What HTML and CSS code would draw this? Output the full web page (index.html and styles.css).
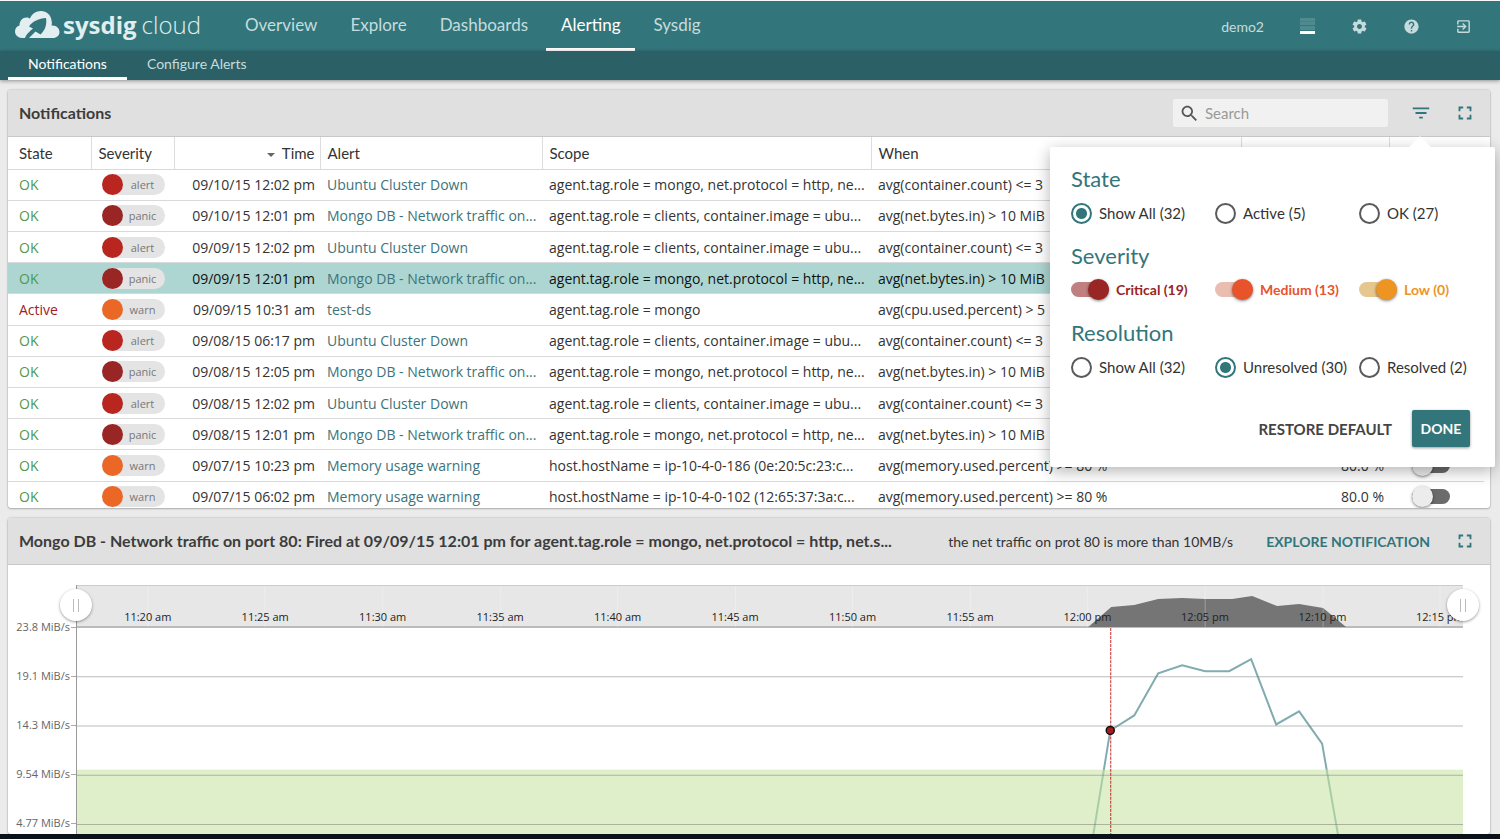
FILE: index.html
```html
<!DOCTYPE html>
<html lang="en">
<head>
	<meta charset="utf-8">
	<title>Sysdig Cloud - Alerting</title>
	<link rel="stylesheet" href="styles.css">
</head>
<body>
	<header class="topbar">
		<a class="logo" href="#">
			<svg class="logo-mark" viewBox="0 0 45 28">
				<path fill="#e3eef0" fill-rule="evenodd" d="M7 27C3 27 0 24 0 20.500C0 17.500 2 15 4.500 14.500C4.500 10 7.500 6.500 11.500 6.500C13 6.500 14 7 15 7.500C16.500 3 21 0 26 0C31.500 0 36 4 36.500 9.500C37 11 37 12.500 36.500 14.500C41 14 44.500 17 44.500 21C44.500 24.500 41.500 27 38 27H14L20.500 20.500L25.500 23.500C30.500 19 32 13 31 7C24 7.500 17.500 10 14 15.500L18 17.500C15 20 11 23.500 10 27Z"/>
			</svg>
			<span class="logo-name">sysdig</span><span class="logo-cloud">cloud</span>
		</a>
		<nav class="main-nav">
			<a href="#">Overview</a>
			<a href="#">Explore</a>
			<a href="#">Dashboards</a>
			<a href="#" class="active">Alerting</a>
			<a href="#">Sysdig</a>
		</nav>
		<div class="user-tools">
			<a href="#" class="user">demo2</a>
			<button class="tool" aria-label="Load"><span class="bars"></span></button>
			<button class="tool" aria-label="Settings">
				<svg viewBox="0 0 24 24"><path d="M19.430 12.980c.04-.32.07-.64.07-.98s-.03-.66-.07-.98l2.110-1.650c.19-.15.24-.42.12-.64l-2-3.460c-.12-.22-.39-.3-.61-.22l-2.490 1c-.52-.4-1.080-.73-1.690-.98l-.38-2.650C14.460 2.180 14.250 2 14 2h-4c-.25 0-.46.18-.49.42l-.38 2.650c-.61.25-1.170.59-1.690.98l-2.490-1c-.23-.09-.49 0-.61.22l-2 3.460c-.13.22-.07.49.12.64l2.110 1.650c-.04.32-.07.65-.07.98s.03.66.07.98l-2.110 1.650c-.19.15-.24.42-.12.64l2 3.460c.12.22.39.3.61.22l2.490-1c.52.4 1.080.73 1.690.98l.38 2.650c.03.24.24.42.49.42h4c.25 0 .46-.18.49-.42l.38-2.650c.61-.25 1.170-.59 1.690-.98l2.490 1c.23.09.49 0 .61-.22l2-3.460c.12-.22.07-.49-.12-.64zM12 15.500c-1.930 0-3.500-1.570-3.500-3.500s1.570-3.500 3.500-3.500 3.500 1.570 3.500 3.500-1.570 3.500-3.500 3.500z"/></svg>
			</button>
			<button class="tool" aria-label="Help">
				<svg viewBox="0 0 24 24"><path d="M12 2C6.480 2 2 6.480 2 12s4.480 10 10 10 10-4.480 10-10S17.520 2 12 2zm1 17h-2v-2h2zm2.070-7.750l-.9.920C13.450 12.900 13 13.500 13 15h-2v-.5c0-1.100.45-2.100 1.170-2.830l1.240-1.260c.37-.36.59-.86.59-1.410 0-1.100-.9-2-2-2s-2 .9-2 2H8c0-2.210 1.790-4 4-4s4 1.790 4 4c0 .88-.36 1.680-.93 2.250z"/></svg>
			</button>
			<button class="tool" aria-label="Sign out">
				<svg viewBox="0 0 24 24"><path d="M10.090 15.590L11.500 17l5-5-5-5-1.410 1.410L12.670 11H3v2h9.670zM19 3H5c-1.110 0-2 .9-2 2v4h2V5h14v14H5v-4H3v4c0 1.100.89 2 2 2h14c1.100 0 2-.9 2-2V5c0-1.100-.9-2-2-2z"/></svg>
			</button>
		</div>
	</header>
	<nav class="sub-nav">
		<a href="#" class="active">Notifications</a>
		<a href="#">Configure Alerts</a>
	</nav>

	<main class="content">
		<section class="panel">
			<div class="panel-head">
				<h2>Notifications</h2>
				<label class="search">
					<svg viewBox="0 0 24 24"><path d="M15.500 14h-.79l-.28-.27C15.410 12.590 16 11.110 16 9.500 16 5.910 13.090 3 9.500 3S3 5.910 3 9.500 5.910 16 9.500 16c1.610 0 3.090-.59 4.230-1.570l.27.28v.79l5 4.990L20.490 19zm-6 0C7.010 14 5 11.990 5 9.500S7.010 5 9.500 5 14 7.010 14 9.500 11.990 14 9.500 14z"/></svg>
					<input type="text" placeholder="Search" aria-label="Search">
				</label>
				<button class="icon-btn" aria-label="Filter">
					<svg viewBox="0 0 24 24"><path d="M10 18h4v-2h-4zM3 6v2h18V6zm3 7h12v-2H6z"/></svg>
				</button>
				<button class="icon-btn" aria-label="Full screen">
					<svg viewBox="0 0 24 24"><path d="M5 5h5v2H7v3H5zM14 5h5v5h-2V7h-3zM17 14h2v5h-5v-2h3zM5 14h2v3h3v2H5z"/></svg>
				</button>

				<form class="filter">
					<fieldset>
						<legend>State</legend>
						<div class="options">
							<label><input type="radio" name="state" checked>Show All (32)</label>
							<label><input type="radio" name="state">Active (5)</label>
							<label><input type="radio" name="state">OK (27)</label>
						</div>
					</fieldset>
					<fieldset>
						<legend>Severity</legend>
						<div class="options severities">
							<label class="critical"><input type="checkbox" class="toggle" checked>Critical (19)</label>
							<label class="medium"><input type="checkbox" class="toggle" checked>Medium (13)</label>
							<label class="low"><input type="checkbox" class="toggle" checked>Low (0)</label>
						</div>
					</fieldset>
					<fieldset>
						<legend>Resolution</legend>
						<div class="options">
							<label><input type="radio" name="resolution">Show All (32)</label>
							<label><input type="radio" name="resolution" checked>Unresolved (30)</label>
							<label><input type="radio" name="resolution">Resolved (2)</label>
						</div>
					</fieldset>
					<div class="actions">
						<button type="reset" class="restore">RESTORE DEFAULT</button>
						<button type="button" class="done">DONE</button>
					</div>
				</form>
			</div>

			<div class="table-wrap">
				<table>
					<colgroup>
						<col class="col-state"><col class="col-severity"><col class="col-time"><col class="col-alert"><col class="col-scope"><col><col class="col-value"><col class="col-toggle">
					</colgroup>
					<thead>
						<tr><th>State</th><th>Severity</th><th class="time"><span class="caret"></span>Time</th><th>Alert</th><th>Scope</th><th>When</th><th></th><th></th></tr>
					</thead>
					<tbody>
						<tr><td class="ok">OK</td><td><span class="pill alert">alert</span></td><td class="time">09/10/15 12:02 pm</td><td><a href="#">Ubuntu Cluster Down</a></td><td>agent.tag.role = mongo, net.protocol = http, ne...</td><td>avg(container.count) &lt;= 3</td><td></td><td></td></tr>
						<tr><td class="ok">OK</td><td><span class="pill panic">panic</span></td><td class="time">09/10/15 12:01 pm</td><td><a href="#">Mongo DB - Network traffic on...</a></td><td>agent.tag.role = clients, container.image = ubu...</td><td>avg(net.bytes.in) &gt; 10 MiB</td><td></td><td></td></tr>
						<tr><td class="ok">OK</td><td><span class="pill alert">alert</span></td><td class="time">09/09/15 12:02 pm</td><td><a href="#">Ubuntu Cluster Down</a></td><td>agent.tag.role = clients, container.image = ubu...</td><td>avg(container.count) &lt;= 3</td><td></td><td></td></tr>
						<tr class="selected"><td class="ok">OK</td><td><span class="pill panic">panic</span></td><td class="time">09/09/15 12:01 pm</td><td><a href="#">Mongo DB - Network traffic on...</a></td><td>agent.tag.role = mongo, net.protocol = http, ne...</td><td>avg(net.bytes.in) &gt; 10 MiB</td><td></td><td></td></tr>
						<tr><td class="bad">Active</td><td><span class="pill warn">warn</span></td><td class="time">09/09/15 10:31 am</td><td><a href="#">test-ds</a></td><td>agent.tag.role = mongo</td><td>avg(cpu.used.percent) &gt; 5</td><td></td><td></td></tr>
						<tr><td class="ok">OK</td><td><span class="pill alert">alert</span></td><td class="time">09/08/15 06:17 pm</td><td><a href="#">Ubuntu Cluster Down</a></td><td>agent.tag.role = clients, container.image = ubu...</td><td>avg(container.count) &lt;= 3</td><td></td><td></td></tr>
						<tr><td class="ok">OK</td><td><span class="pill panic">panic</span></td><td class="time">09/08/15 12:05 pm</td><td><a href="#">Mongo DB - Network traffic on...</a></td><td>agent.tag.role = mongo, net.protocol = http, ne...</td><td>avg(net.bytes.in) &gt; 10 MiB</td><td></td><td></td></tr>
						<tr><td class="ok">OK</td><td><span class="pill alert">alert</span></td><td class="time">09/08/15 12:02 pm</td><td><a href="#">Ubuntu Cluster Down</a></td><td>agent.tag.role = clients, container.image = ubu...</td><td>avg(container.count) &lt;= 3</td><td></td><td></td></tr>
						<tr><td class="ok">OK</td><td><span class="pill panic">panic</span></td><td class="time">09/08/15 12:01 pm</td><td><a href="#">Mongo DB - Network traffic on...</a></td><td>agent.tag.role = mongo, net.protocol = http, ne...</td><td>avg(net.bytes.in) &gt; 10 MiB</td><td></td><td></td></tr>
						<tr><td class="ok">OK</td><td><span class="pill warn">warn</span></td><td class="time">09/07/15 10:23 pm</td><td><a href="#">Memory usage warning</a></td><td>host.hostName = ip-10-4-0-186 (0e:20:5c:23:c...</td><td>avg(memory.used.percent) &gt;= 80 %</td><td class="value">80.0 %</td><td class="resolve"><input type="checkbox" class="toggle" aria-label="Resolved"></td></tr>
						<tr><td class="ok">OK</td><td><span class="pill warn">warn</span></td><td class="time">09/07/15 06:02 pm</td><td><a href="#">Memory usage warning</a></td><td>host.hostName = ip-10-4-0-102 (12:65:37:3a:c...</td><td>avg(memory.used.percent) &gt;= 80 %</td><td class="value">80.0 %</td><td class="resolve"><input type="checkbox" class="toggle" aria-label="Resolved"></td></tr>
					</tbody>
				</table>
			</div>
		</section>

		<section class="panel detail">
			<div class="panel-head">
				<h2>Mongo DB - Network traffic on port 80: Fired at 09/09/15 12:01 pm for agent.tag.role = mongo, net.protocol = http, net.s...</h2>
				<p>the net traffic on prot 80 is more than 10MB/s</p>
				<a href="#" class="explore">EXPLORE NOTIFICATION</a>
				<button class="icon-btn" aria-label="Full screen">
					<svg viewBox="0 0 24 24"><path d="M5 5h5v2H7v3H5zM14 5h5v5h-2V7h-3zM17 14h2v5h-5v-2h3zM5 14h2v3h3v2H5z"/></svg>
				</button>
			</div>
			<div class="chart">
				<div class="y-axis">
					<span>23.8 MiB/s</span>
					<span>19.1 MiB/s</span>
					<span>14.3 MiB/s</span>
					<span>9.54 MiB/s</span>
					<span>4.77 MiB/s</span>
				</div>
				<div class="plot">
					<div class="range">
						<svg viewBox="0 0 1387 41" preserveAspectRatio="none">
							<path fill="#757575" d="M1012 41L1035 21L1058 19L1082 13L1106 12L1129 13H1156L1176 10L1201 20L1223 18L1247 22L1270 41Z"/>
							<path stroke="#fff" stroke-opacity=".3" d="M71 0V41M188 0V41M306 0V41M424 0V41M541 0V41M659 0V41M776 0V41M894 0V41M1011 0V41M1129 0V41M1247 0V41M1364 0V41"/>
						</svg>
						<div class="times">
							<span>11:20 am</span><span>11:25 am</span><span>11:30 am</span><span>11:35 am</span><span>11:40 am</span><span>11:45 am</span><span>11:50 am</span><span>11:55 am</span><span>12:00 pm</span><span>12:05 pm</span><span>12:10 pm</span><span>12:15 pm</span>
						</div>
						<button class="handle start" aria-label="Range start"></button>
						<button class="handle end" aria-label="Range end"></button>
					</div>
					<svg class="series" viewBox="0 0 1387 206" preserveAspectRatio="none">
						<path fill="none" stroke="#80acb1" stroke-width="2" d="M1016 212L1034 102L1058 87L1082 45L1106 37L1129 43H1153L1175 31L1200 96L1223 83L1246 115L1263 212"/>
						<rect y="141" width="1387" height="65" fill="#c6e4a2" fill-opacity=".58"/>
						<path stroke="#777" stroke-opacity=".5" d="M0 48.500H1387M0 97.500H1387M0 146.500H1387M0 195.500H1387"/>
						<path stroke="#c62828" stroke-dasharray="3 1" d="M1034.500 0V206"/>
						<circle cx="1034" cy="102" r="4" fill="#a32020" stroke="#111" stroke-width="1.500"/>
					</svg>
				</div>
			</div>
		</section>
	</main>
	<footer class="bottom-edge"></footer>
</body>
</html>
```
FILE: styles.css
```css
* {
	box-sizing: border-box;
}

body {
	margin: 0;
	height: 100vh;
	display: flex;
	flex-direction: column;
	overflow: hidden;
	background: #ebebeb;
	border-top: 1px solid #f4f8f8;
	color: #333;
	font-family: "Lato", sans-serif;
	font-size: 15px;
}

a {
	color: inherit;
	text-decoration: none;
}

button {
	font: inherit;
	padding: 0;
	border: 0;
	background: none;
	cursor: pointer;
}

svg {
	display: block;
}

/* top bars */
.topbar {
	flex: none;
	display: flex;
	height: 50px;
	padding-left: 15px;
	background: #32767b;
	color: #c5dcde;
}

.logo {
	display: flex;
	align-items: center;
	width: 215px;
	color: #e3eef0;
	font-family: "Open Sans", sans-serif;
	font-size: 24px;
	line-height: 30px;
	padding-bottom: 3px;
}

.logo-mark {
	width: 45px;
	height: 28px;
	margin-right: 3px;
}

.logo-name {
	font-weight: 700;
	margin-right: 5px;
}

.logo-cloud {
	font-weight: 300;
}

.main-nav {
	display: flex;
	font-size: 17px;
}

.main-nav a {
	padding: 0 15px;
	margin-right: 3px;
	line-height: 47px;
	border-bottom: 3px solid transparent;
}

.main-nav .active,
.sub-nav .active {
	color: #fff;
	border-color: #fff;
}

.user-tools {
	display: flex;
	align-items: center;
	margin-left: auto;
	padding-right: 11px;
}

.user {
	margin-right: 17px;
	font-size: 14px;
}

.tool {
	display: flex;
	justify-content: center;
	width: 52px;
}

.tool svg {
	width: 17px;
	height: 17px;
	fill: #c5dcde;
}

.bars {
	width: 15px;
	height: 16px;
	background: linear-gradient(#4f8a8f 3px, #468388 3px 4px, #4f8a8f 4px 7px, #32767b 7px 8px, #4f8a8f 8px 12px, #32767b 12px 13px, #fff 13px);
}

.sub-nav {
	flex: none;
	display: flex;
	height: 29px;
	padding-left: 8px;
	background: #2b6166;
	color: #c5dcde;
	font-size: 14px;
	box-shadow: 0 1px 4px rgba(0, 0, 0, .4);
}

.sub-nav a {
	padding: 0 20px;
	line-height: 26px;
	border-bottom: 3px solid transparent;
}

/* panels */
.content {
	flex: 1;
	min-height: 0;
	display: flex;
	flex-direction: column;
	gap: 10px;
	padding: 10px 10px 0 8px;
}

.panel {
	flex: none;
	background: #fff;
	border-radius: 3px;
	box-shadow: 0 0 2px rgba(0, 0, 0, .3), 0 1px 2px rgba(0, 0, 0, .2);
}

.detail {
	flex: 1;
	min-height: 0;
	overflow: hidden;
}

.panel-head {
	position: relative;
	display: flex;
	align-items: center;
	height: 47px;
	padding: 0 14px 0 11px;
	background: #e0e0e0;
	border-bottom: 1px solid #c8c8c8;
	border-radius: 3px 3px 0 0;
}

.panel-head h2 {
	margin: 0;
	font-size: 16px;
	line-height: 20px;
	font-weight: 700;
	color: #3c3c3c;
	overflow: hidden;
	white-space: nowrap;
	text-overflow: ellipsis;
}

.search {
	flex: none;
	display: flex;
	align-items: center;
	width: 215px;
	height: 28px;
	margin-left: auto;
	margin-right: 22px;
	padding-left: 6px;
	background: #f1f1f1;
	border-radius: 2px;
}

.search svg {
	flex: none;
	width: 21px;
	height: 21px;
	fill: #555;
}

.search input {
	width: 100%;
	border: 0;
	padding: 0 5px;
	background: none;
	font: inherit;
	outline: 0;
}

.search input::placeholder {
	color: #999;
}

.icon-btn svg {
	width: 22px;
	height: 22px;
	fill: #32767b;
}

.icon-btn + .icon-btn {
	margin-left: 22px;
}

/* filter popup */
.filter {
	position: absolute;
	top: 57px;
	right: -5px;
	z-index: 2;
	width: 445px;
	padding: 18px 21px 20px;
	background: #fff;
	border-radius: 2px;
	box-shadow: 0 4px 16px rgba(0, 0, 0, .3);
}

.filter::before {
	content: "";
	position: absolute;
	top: -11px;
	right: 64px;
	border: 11px solid transparent;
	border-top: 0;
	border-bottom-color: #fff;
}

.filter fieldset {
	margin: 0;
	padding: 0;
	border: 0;
	height: 77px;
}

.filter legend {
	padding: 0;
	font-size: 22px;
	line-height: 28px;
	color: #32767b;
}

.options {
	display: grid;
	grid-template-columns: 144px 144px 1fr;
	padding-top: 9px;
}

.options label {
	display: flex;
	align-items: center;
	height: 22px;
	white-space: nowrap;
}

.options input[type=radio] {
	appearance: none;
	width: 21px;
	height: 21px;
	margin: 0 7px 0 0;
	border: 2px solid #5a5a5a;
	border-radius: 50%;
}

.options input[type=radio]:checked {
	border-color: #32767b;
	background: radial-gradient(circle, #32767b 5px, #fff 6px);
}

.severities {
	padding-top: 8px;
	font-size: 14px;
	font-weight: 700;
}

.toggle {
	appearance: none;
	display: flex;
	align-items: center;
	width: 38px;
	height: 15px;
	margin: 0;
	border-radius: 8px;
	background: #6b6b6b;
}

.toggle::before {
	content: "";
	width: 21px;
	height: 21px;
	flex: none;
	border-radius: 50%;
	background: #ececec;
	box-shadow: 0 1px 3px rgba(0, 0, 0, .5);
}

.toggle:checked {
	justify-content: flex-end;
	margin-right: 7px;
}

.critical { color: #992624; }
.medium { color: #e9532c; }
.low { color: #ee9422; }

.critical .toggle { background: #c08080; }
.medium .toggle { background: #e9bdb0; }
.low .toggle { background: #e5c78f; }

.critical .toggle::before { background: #992624; }
.medium .toggle::before { background: #e9532c; }
.low .toggle::before { background: #ee9422; }

.actions {
	display: flex;
	justify-content: flex-end;
	align-items: center;
	gap: 20px;
	margin-top: 14px;
	padding-right: 4px;
	font-weight: 700;
}

.restore {
	color: #444;
}

.done {
	height: 37px;
	width: 58px;
	border-radius: 2px;
	background: #32767b;
	color: #fff;
	font-size: 14px;
	box-shadow: 0 1px 3px rgba(0, 0, 0, .4);
}

/* notifications table */
.table-wrap {
	height: 371px;
	padding-right: 6px;
	overflow: hidden;
}

table {
	width: 100%;
	height: 376px;
	table-layout: fixed;
	border-collapse: collapse;
	font-family: "Open Sans", sans-serif;
	font-size: 14px;
}

.col-state { width: 83px; }
.col-severity { width: 83px; }
.col-time { width: 146px; }
.col-alert { width: 222px; }
.col-scope { width: 329px; }
.col-value { width: 148px; }
.col-toggle { width: 95px; }

th,
td {
	padding: 0 5px 0 7px;
	text-align: left;
	white-space: nowrap;
	overflow: hidden;
	text-overflow: ellipsis;
	border-bottom: 1px solid #d9d9d9;
}

th {
	height: 32px;
	font-family: "Lato", sans-serif;
	font-size: 15px;
	font-weight: 400;
	border-right: 1px solid #ddd;
}

th:last-child {
	border-right: 0;
}

th:first-child,
td:first-child {
	padding-left: 11px;
}

td a {
	color: #3d737a;
}

.ok { color: #4f9a4a; }
.bad { color: #a32020; }

.time,
.value {
	text-align: right;
}

.caret {
	display: inline-block;
	margin-right: 7px;
	vertical-align: middle;
	border: 4px solid transparent;
	border-top-color: #666;
	border-bottom: 0;
}

.selected {
	background: #add6d2;
	color: #111;
}

.pill {
	display: grid;
	grid-template-columns: 21px 1fr;
	align-items: center;
	width: 63px;
	height: 21px;
	margin-left: 4px;
	padding-right: 3px;
	border-radius: 11px;
	background: #e4e4e4;
	color: #777;
	font-size: 11px;
	line-height: 21px;
	text-align: center;
}

.pill::before {
	content: "";
	width: 21px;
	height: 21px;
	border-radius: 50%;
}

.alert::before { background: #b9251f; }
.panic::before { background: #992624; }
.warn::before { background: #eb6726; }

.resolve {
	padding-left: 23px;
	overflow: visible;
}

/* event detail */
.detail p {
	margin: 0 0 0 auto;
	font-size: 14px;
	white-space: nowrap;
}

.explore {
	margin: 0 24px 0 33px;
	font-size: 14px;
	font-weight: 700;
	color: #32767b;
	white-space: nowrap;
}

.chart {
	display: flex;
	padding: 20px 27px 0 0;
	font-family: "Open Sans", sans-serif;
	font-size: 11px;
}

.y-axis {
	display: flex;
	flex-direction: column;
	gap: 33px;
	width: 68px;
	padding-top: 34px;
	color: #666;
}

.y-axis span {
	display: flex;
	justify-content: flex-end;
	align-items: center;
	gap: 1px;
	line-height: 16px;
	white-space: nowrap;
}

.y-axis span::after {
	content: "";
	width: 5px;
	height: 1px;
	background: #aaa;
}

.plot {
	flex: 1;
	min-width: 0;
	border-left: 1px solid #999;
}

.range {
	position: relative;
	height: 43px;
	border-top: 1px solid #ccc;
	border-bottom: 2px solid #bbb;
	background: #e7e7e7;
}

.range svg {
	width: 100%;
	height: 41px;
}

.times {
	position: absolute;
	left: 0;
	right: 0;
	bottom: 0;
	display: flex;
	padding-left: 12px;
	overflow: hidden;
	line-height: 18px;
	color: #222;
}

.times span {
	flex: none;
	width: 8.55%;
	text-align: center;
}

.handle {
	position: absolute;
	top: 3px;
	width: 32px;
	height: 32px;
	border-radius: 50%;
	background: #fff;
	box-shadow: 0 1px 3px rgba(0, 0, 0, .4);
}

.handle::before {
	content: "";
	display: block;
	width: 4px;
	height: 13px;
	margin: 0 auto;
	border: solid #bbb;
	border-width: 0 1px;
}

.start { left: -17px; }
.end { right: -16px; }

.series {
	width: 100%;
	height: 207px;
}

.bottom-edge {
	flex: none;
	height: 5px;
	background: #0a1118;
}
```
